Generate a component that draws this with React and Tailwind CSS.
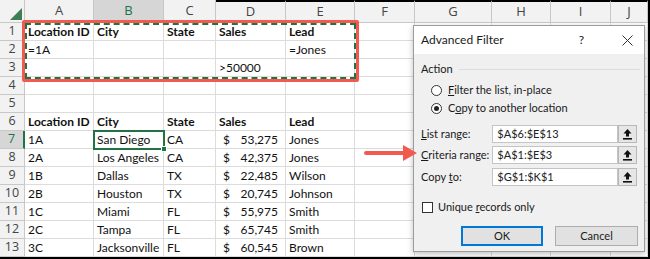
import React from "react";

const GRID =
  "grid grid-cols-[25px_69px_70px_52px_70px_69px_60px_77px_59px_60px_1fr]";
const LETTERS = ["A", "B", "C", "D", "E", "F", "G", "H", "I", "J"];

const H = (t) => ({ t, b: true });
const headerRow = [H("Location ID"), H("City"), H("State"), H("Sales"), H("Lead")];

const rows = [
  headerRow,
  ["=1A", "", "", "", "=Jones"],
  ["", "", "", ">50000", ""],
  [],
  [],
  headerRow,
  ["1A", "San Diego", "CA", { m: "53,275" }, "Jones"],
  ["2A", "Los Angeles", "CA", { m: "42,375" }, "Jones"],
  ["1B", "Dallas", "TX", { m: "22,485" }, "Wilson"],
  ["2B", "Houston", "TX", { m: "20,745" }, "Johnson"],
  ["1C", "Miami", "FL", { m: "55,975" }, "Smith"],
  ["2C", "Tampa", "FL", { m: "65,745" }, "Smith"],
  ["3C", "Jacksonville", "FL", { m: "60,545" }, "Brown"],
];

function Cell({ v }) {
  const base =
    "h-[18px] border-r border-b border-[#dcdcdc] text-[12px] leading-[17px] text-[#111] whitespace-nowrap";
  if (v && v.m) {
    return (
      <div className={`${base} flex justify-between pl-[7px] pr-[7px]`}>
        <span>$</span>
        <span>{v.m}</span>
      </div>
    );
  }
  if (v && v.t) {
    return <div className={`${base} px-[3px] font-bold`}>{v.t}</div>;
  }
  return <div className={`${base} px-[3px]`}>{v || ""}</div>;
}

function UploadIcon() {
  return (
    <svg width="9" height="11" viewBox="0 0 9 11">
      <path d="M4.5 0 L8.5 4.5 H6 V7.5 H3 V4.5 H0.5 Z" fill="#111" />
      <rect x="0" y="9" width="9" height="1.6" fill="#111" />
    </svg>
  );
}

function RangeRow({ label, value }) {
  return (
    <div className="flex items-center h-[18px] pl-[7px] pr-[7px]">
      <div className="w-[72px] text-[11px] whitespace-nowrap">{label}</div>
      <div className="w-[127px] h-[18px] bg-white border border-[#c4c4c4] pl-[4px] text-[11px] leading-[16px] text-[#222]">
        {value}
      </div>
      <div className="w-[19px] h-[18px] bg-[#e6e6e6] border border-[#b8b8b8] flex items-center justify-center">
        <UploadIcon />
      </div>
    </div>
  );
}

function Radio({ checked, children }) {
  return (
    <div className="flex items-center h-[16px] pl-[17px]">
      <div className="w-[11px] h-[11px] rounded-full border border-[#333] bg-white flex items-center justify-center">
        {checked && <div className="w-[5px] h-[5px] rounded-full bg-[#222]" />}
      </div>
      <span className="ml-[6px] text-[11px]">{children}</span>
    </div>
  );
}

function Dialog() {
  return (
    <div className="absolute left-[413px] top-[25px] w-[232px] h-[227px] border border-[#9c9c9c] bg-[#f0f0f0] shadow-[0_2px_6px_rgba(0,0,0,0.25)] font-[Lato,sans-serif] text-[#1a1a1a]">
      <div className="h-[28px] bg-white flex items-center pl-[7px]">
        <span className="flex-1 text-[12px]">Advanced Filter</span>
        <span className="text-[12px] mr-[38px]">?</span>
        <svg width="11" height="11" viewBox="0 0 11 11" className="mr-[11px]">
          <path d="M0.5 0.5 L10.5 10.5 M10.5 0.5 L0.5 10.5" stroke="#333" strokeWidth="1" />
        </svg>
      </div>

      {/* Action group */}
      <div className="mt-[7px] h-[16px] flex items-center pl-[7px] pr-[4px]">
        <span className="text-[11px]">Action</span>
        <div className="flex-1 h-px bg-[#dcdcdc] ml-[6px]" />
      </div>
      <div className="mt-[5px]">
        <Radio>
          <u>F</u>ilter the list, in-place
        </Radio>
      </div>
      <div className="mt-[2px]">
        <Radio checked>
          C<u>o</u>py to another location
        </Radio>
      </div>

      <div className="mt-[9px]">
        <RangeRow label={<><u>L</u>ist range:</>} value="$A$6:$E$13" />
      </div>
      <div className="mt-[3px]">
        <RangeRow label={<><u>C</u>riteria range:</>} value="$A$1:$E$3" />
      </div>
      <div className="mt-[4px]">
        <RangeRow label={<>Copy <u>t</u>o:</>} value="$G$1:$K$1" />
      </div>

      <div className="mt-[13px] h-[16px] flex items-center pl-[8px]">
        <div className="w-[11px] h-[11px] border border-[#333] bg-white" />
        <span className="ml-[5px] text-[11px]">
          Unique <u>r</u>ecords only
        </span>
      </div>

      <div className="mt-[11px] flex justify-end gap-[12px] pr-[6px]">
        <div className="w-[82px] h-[20px] border-2 border-[#0078d7] bg-[#e1e1e1] flex items-center justify-center text-[11px]">
          OK
        </div>
        <div className="w-[83px] h-[20px] border border-[#adadad] bg-[#e1e1e1] flex items-center justify-center text-[11px]">
          Cancel
        </div>
      </div>
    </div>
  );
}

export default function App() {
  return (
    <div className="relative w-[650px] h-[259px] bg-white border-r-2 border-b-2 border-black overflow-hidden font-[Lato,sans-serif]">
      {/* Column headers */}
      <div className={`${GRID} h-[23px]`}>
        <div className="relative bg-[#f2f2f2] border-r border-b border-[#c8c8c8]">
          <svg width="12" height="12" viewBox="0 0 12 12" className="absolute right-[2px] bottom-[2px]">
            <polygon points="12,0 12,12 0,12" fill="#3f7d55" />
          </svg>
        </div>
        {LETTERS.map((l, i) => (
          <div
            key={l}
            className={`flex items-center justify-center border-r border-[#c8c8c8] text-[13px] font-['Open_Sans',sans-serif] ${
              i === 1
                ? "bg-[#d6d6d6] text-[#217346] border-b-2 border-b-[#217346]"
                : "bg-[#f2f2f2] text-[#444] border-b"
            } ${i >= 3 ? "border-t-2 border-t-black" : ""}`}
          >
            {l}
          </div>
        ))}
      </div>

      {/* Rows */}
      {rows.map((r, ri) => (
        <div key={ri} className={GRID}>
          <div
            className={`h-[18px] border-b border-[#c8c8c8] flex items-center justify-center text-[12.5px] font-['Open_Sans',sans-serif] ${
              ri === 6
                ? "bg-[#d6d6d6] text-[#217346] border-r-2 border-r-[#217346]"
                : "bg-[#f2f2f2] text-[#444] border-r"
            }`}
          >
            {ri + 1}
          </div>
          {LETTERS.map((l, ci) => (
            <Cell key={l} v={r[ci]} />
          ))}
        </div>
      ))}

      {/* Criteria range highlight */}
      <div className="absolute left-[22px] top-[20px] w-[337px] h-[62px] border-[3px] border-[#f25a50] rounded-[2px]" />
      <div className="absolute left-[25px] top-[23px] w-[331px] h-[56px] border-2 border-dashed border-[#217346]" />

      {/* Active cell B7 */}
      <div className="absolute left-[93px] top-[130px] w-[72px] h-[20px] border-2 border-[#217346]">
        <div className="absolute -right-[4px] -bottom-[4px] w-[6px] h-[6px] bg-[#217346] border border-white" />
      </div>

      <Dialog />

      {/* Pointer arrow */}
      <svg width="54" height="18" viewBox="0 0 54 18" className="absolute left-[364px] top-[144px]">
        <line x1="2" y1="9" x2="42" y2="9" stroke="#f25a50" strokeWidth="4" strokeLinecap="round" />
        <polygon points="39,1 53,9 39,17" fill="#f25a50" />
      </svg>
    </div>
  );
}
